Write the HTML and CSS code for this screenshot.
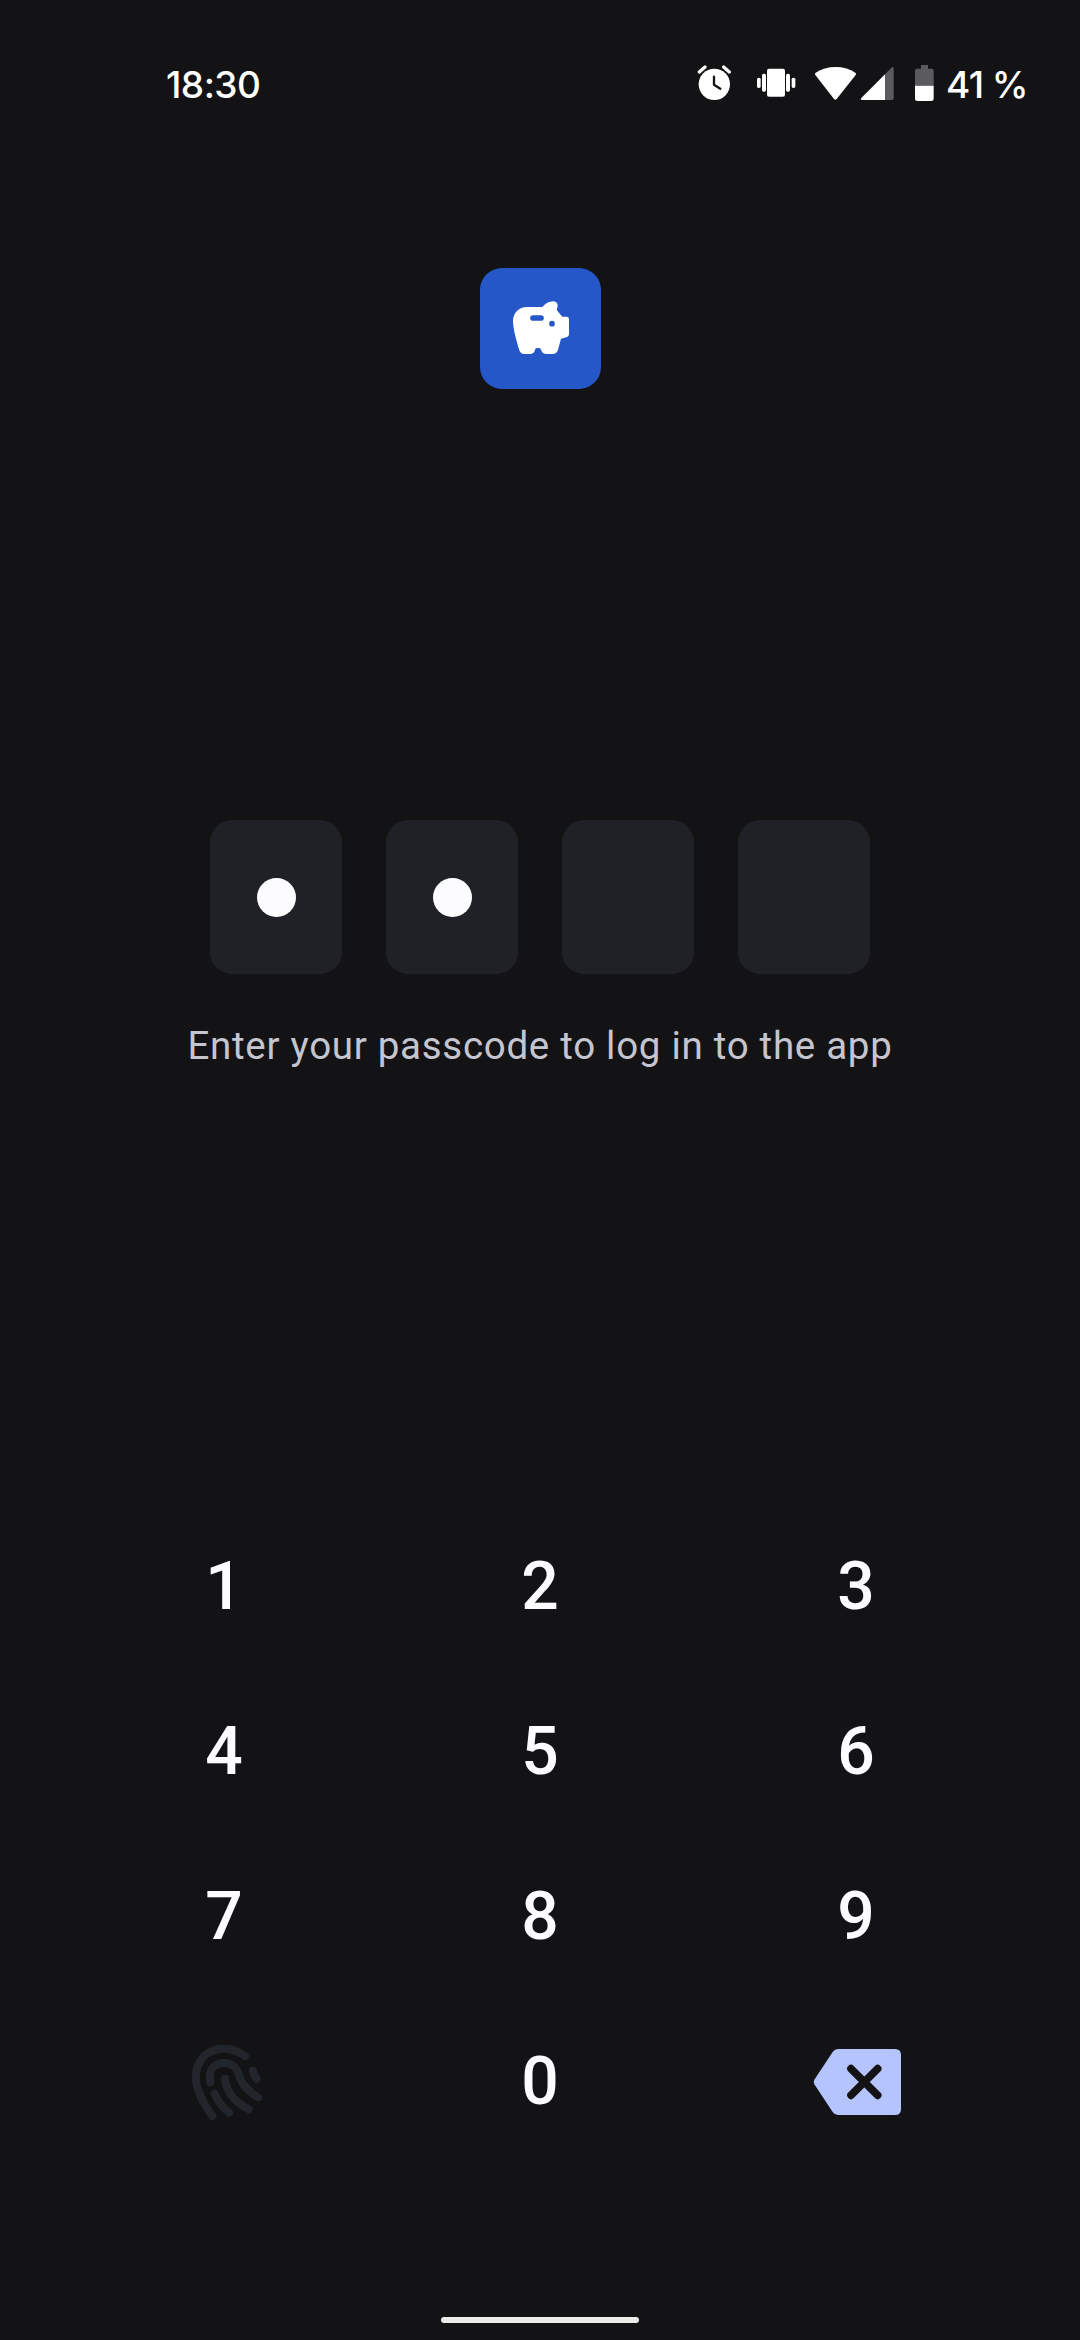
FILE: index.html
```html
<!DOCTYPE html>
<html lang="en">
<head>
<meta charset="utf-8">
<title>Passcode</title>
<link rel="stylesheet" href="styles.css">
</head>
<body>
<div class="screen">
  <header class="status">
    <span class="clock">18:30</span>
    <div class="status-icons">
      <svg class="alarm" viewBox="51 39 105 120">
        <circle cx="103" cy="103" r="47" fill="#fff"/>
        <path d="M58 66L75 51M148 66L131 51" stroke="#fff" stroke-width="10" stroke-linecap="round"/>
        <path d="M102 80V104L121 116" fill="none" stroke="#131315" stroke-width="7" stroke-linecap="round" stroke-linejoin="round"/>
      </svg>
      <svg class="vibrate" viewBox="228 39 120 120" fill="#fff">
        <rect x="261" y="56" width="54" height="84" rx="6"/>
        <rect x="246" y="71" width="12" height="54" rx="5"/>
        <rect x="318" y="71" width="12" height="54" rx="5"/>
        <rect x="231" y="83" width="11" height="31" rx="5"/>
        <rect x="335" y="83" width="11" height="31" rx="5"/>
      </svg>
      <svg class="wifi" viewBox="402 39 129 120">
        <path d="M406 75Q403 71 407 68Q433 51 467 51Q501 51 526 68Q530 71 527 75L470 147Q466 152 462 147Z" fill="#fff"/>
      </svg>
      <svg class="signal" viewBox="540 39 105 120">
        <path d="M615 73L634 53Q641 48 641 56V145Q641 150 636 150H615Z" fill="#5b5b5d"/>
        <path d="M615 73V150H546Q540 149 544 144Z" fill="#fff"/>
      </svg>
      <svg class="battery" viewBox="162 39 63 120">
        <path d="M183 45H204V56H215Q221 56 221 62V107H165V62Q165 56 171 56H183Z" fill="#5b5b5d"/>
        <path d="M165 107H221V146Q221 153 214 153H172Q165 153 165 146Z" fill="#fff"/>
      </svg>
    </div>
    <span class="charge">41<span class="percent">%</span></span>
  </header>

  <main class="login">
    <svg class="logo" viewBox="30 30 363 363">
      <path fill="#fff" d="M171 147H217C225 137 237 130 250 130Q264 132 263 145L260 156L277 176H289Q297 176 297 184V229Q297 235 291 237L273 242L264 275Q260 288 247 288H230Q217 288 213 275Q212 270 207 270H201Q196 270 195 275Q192 288 180 288H163Q151 288 148 277C141 254 129 214 129 190C129 164 147 147 171 147Z"/>
      <path d="M189 180H213" stroke="#2557c9" stroke-width="17" stroke-linecap="round"/>
      <circle cx="246" cy="197" r="8.5" fill="#2557c9"/>
    </svg>
    <div class="pin">
      <div class="cell"><span class="dot"></span></div>
      <div class="cell"><span class="dot"></span></div>
      <div class="cell"></div>
      <div class="cell"></div>
    </div>
    <p class="hint">Enter your passcode to log in to the app</p>
  </main>

  <div class="keypad">
    <div class="key">1</div><div class="key">2</div><div class="key">3</div>
    <div class="key">4</div><div class="key">5</div><div class="key">6</div>
    <div class="key">7</div><div class="key">8</div><div class="key">9</div>
    <div class="key">
      <svg class="finger" viewBox="0 3 264 303" fill="none" stroke="#22252b" stroke-width="24" stroke-linecap="round">
        <path d="M195 78C158 50 105 47 71 80C47 104 42 143 53 176C64 208 80 235 97 258"/>
        <path d="M91 157C88 139 88 122 101 110C118 95 145 96 160 108C180 124 174 141 188 161C201 179 216 191 234 202"/>
        <path d="M135 146C138 188 165 216 206 238"/>
        <path d="M104 191C113 214 127 232 147 248"/>
        <path d="M218 122C220 131 224 139 230 146"/>
      </svg>
    </div>
    <div class="key">0</div>
    <div class="key">
      <svg class="erase" viewBox="30 3 276 303">
        <path d="M114 57H285Q303 57 303 75V237Q303 255 285 255H114Q104 255 98 246L43 163Q39 156 43 149L98 66Q104 57 114 57Z" fill="#b6c4fe"/>
        <path d="M153 116L233 196M233 116L153 196" stroke="#131315" stroke-width="23" stroke-linecap="round"/>
      </svg>
    </div>
  </div>

  <footer class="nav"><div class="handle"></div></footer>
</div>
</body>
</html>
```
FILE: styles.css
```css
* { box-sizing: border-box; }
body {
  margin: 0;
  background: #131315;
  color: #fcfcff;
  font-family: Roboto, sans-serif;
}
svg { display: block; flex: none; }
.screen {
  width: 1080px;
  height: 2340px;
  display: flex;
  flex-direction: column;
}
.status {
  height: 166px;
  padding: 0 52px 0 166px;
  display: flex;
  align-items: center;
  color: #fff;
  font-family: Inter, sans-serif;
  font-size: 37px;
  font-weight: 500;
  line-height: 44px;
}
.clock { padding-top: 3px; letter-spacing: -0.5px; }
.status-icons { display: flex; margin-left: auto; }
.status-icons svg { height: 40px; }
.alarm { width: 35px; margin-right: 24px; }
.vibrate { width: 40px; margin-right: 18px; }
.wifi { width: 43px; margin-right: 3px; }
.signal { width: 35px; margin-right: 19px; }
.battery { width: 21px; margin-right: 11px; }
.charge {
  width: 82px;
  padding-top: 3px;
  display: flex;
  justify-content: space-between;
  letter-spacing: -0.5px;
}
.login {
  padding-top: 102px;
  display: flex;
  flex-direction: column;
  align-items: center;
}
.logo {
  width: 121px;
  height: 121px;
  border-radius: 22px;
  background: #2557c9;
}
.pin {
  margin-top: 431px;
  display: flex;
  gap: 44px;
}
.cell {
  width: 132px;
  height: 154px;
  border-radius: 22px;
  background: #202126;
  display: flex;
  align-items: center;
  justify-content: center;
}
.dot {
  width: 39px;
  height: 39px;
  border-radius: 50%;
  background: #fcfcff;
}
.hint {
  margin: 44px 0 0;
  font-size: 38.5px;
  line-height: 56px;
  letter-spacing: 0.71px;
  color: #c5c5d0;
}
.keypad {
  margin-top: 430px;
  padding: 0 66px;
  display: grid;
  grid-template-columns: repeat(3, 316px);
  grid-auto-rows: 165px;
}
.key {
  display: flex;
  align-items: center;
  justify-content: center;
  font-size: 66px;
  font-weight: 500;
}
.finger { width: 88px; height: 101px; }
.erase { width: 92px; height: 101px; }
.nav {
  margin-top: auto;
  padding-bottom: 17px;
  display: flex;
  justify-content: center;
}
.handle {
  width: 198px;
  height: 6px;
  border-radius: 3px;
  background: #ececea;
}
```
